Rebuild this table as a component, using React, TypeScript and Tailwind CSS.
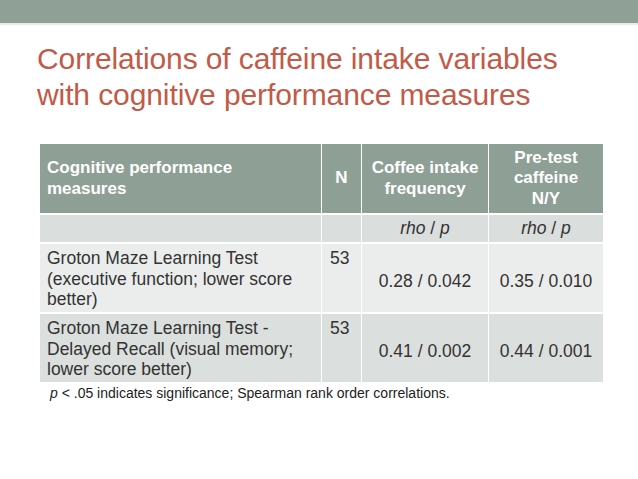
// Slide: correlations of caffeine intake with cognitive measures
const HEAD = "bg-[#8e9f95] text-white font-bold text-[17px] leading-[20.5px]"

const ROWS = [
	{
		label: "Groton Maze Learning Test (executive function; lower score better)",
		n: "53",
		coffee: "0.28 / 0.042",
		pretest: "0.35 / 0.010",
		bg: "bg-[#ebedec]",
	},
	{
		label: "Groton Maze Learning Test - Delayed Recall (visual memory; lower score better)",
		n: "53",
		coffee: "0.41 / 0.002",
		pretest: "0.44 / 0.001",
		bg: "bg-[#dbdfdd]",
	},
]

function RhoP() {
	return (
		<span>
			<i>rho</i> / <i>p</i>
		</span>
	)
}

export default function App() {
	return (
		<div className="w-[638px] h-[479px] bg-white overflow-hidden font-['Liberation_Sans',Arial,sans-serif]">
			{/* top band */}
			<div className="h-[25px] bg-[#8fa096] border-b-2 border-[#e6ebe8]" />

			{/* title */}
			<h1 className="mt-[16px] ml-[37px] text-[30px] leading-[36px] text-[#c25a48] tracking-[-0.1px]">
				Correlations of caffeine intake variables
				<br />
				with cognitive performance measures
			</h1>

			{/* table */}
			<div className="mt-[31px] ml-[40px] w-[563px] grid grid-cols-[281px_39px_126px_114px] gap-x-px gap-y-[2px] bg-white text-[#333] text-[17.5px] leading-[20.5px]">
				<div className={`${HEAD} h-[69px] px-[7px] flex items-center`}>
					Cognitive performance
					<br />
					measures
				</div>
				<div className={`${HEAD} flex items-center justify-center`}>N</div>
				<div className={`${HEAD} flex items-center justify-center text-center`}>
					Coffee intake
					<br />
					frequency
				</div>
				<div className={`${HEAD} flex items-center justify-center text-center`}>
					Pre-test
					<br />
					caffeine
					<br />
					N/Y
				</div>

				<div className="bg-[#dadedc] h-[27px]" />
				<div className="bg-[#dadedc]" />
				<div className="bg-[#dadedc] flex items-center justify-center">
					<RhoP />
				</div>
				<div className="bg-[#dadedc] flex items-center justify-center">
					<RhoP />
				</div>

				{ROWS.map(r => (
					<>
						<div key={r.label} className={`${r.bg} h-[68px] px-[7px] pt-[4px]`}>
							{r.label}
						</div>
						<div className={`${r.bg} px-[8px] pt-[4px]`}>{r.n}</div>
						<div className={`${r.bg} flex items-center justify-center pt-[6px]`}>{r.coffee}</div>
						<div className={`${r.bg} flex items-center justify-center pt-[6px]`}>{r.pretest}</div>
					</>
				))}
			</div>

			<p className="mt-[1px] ml-[50px] text-[14px] leading-[20px] text-[#222]">
				<i>p</i> &lt; .05 indicates significance; Spearman rank order correlations.
			</p>
		</div>
	)
}
